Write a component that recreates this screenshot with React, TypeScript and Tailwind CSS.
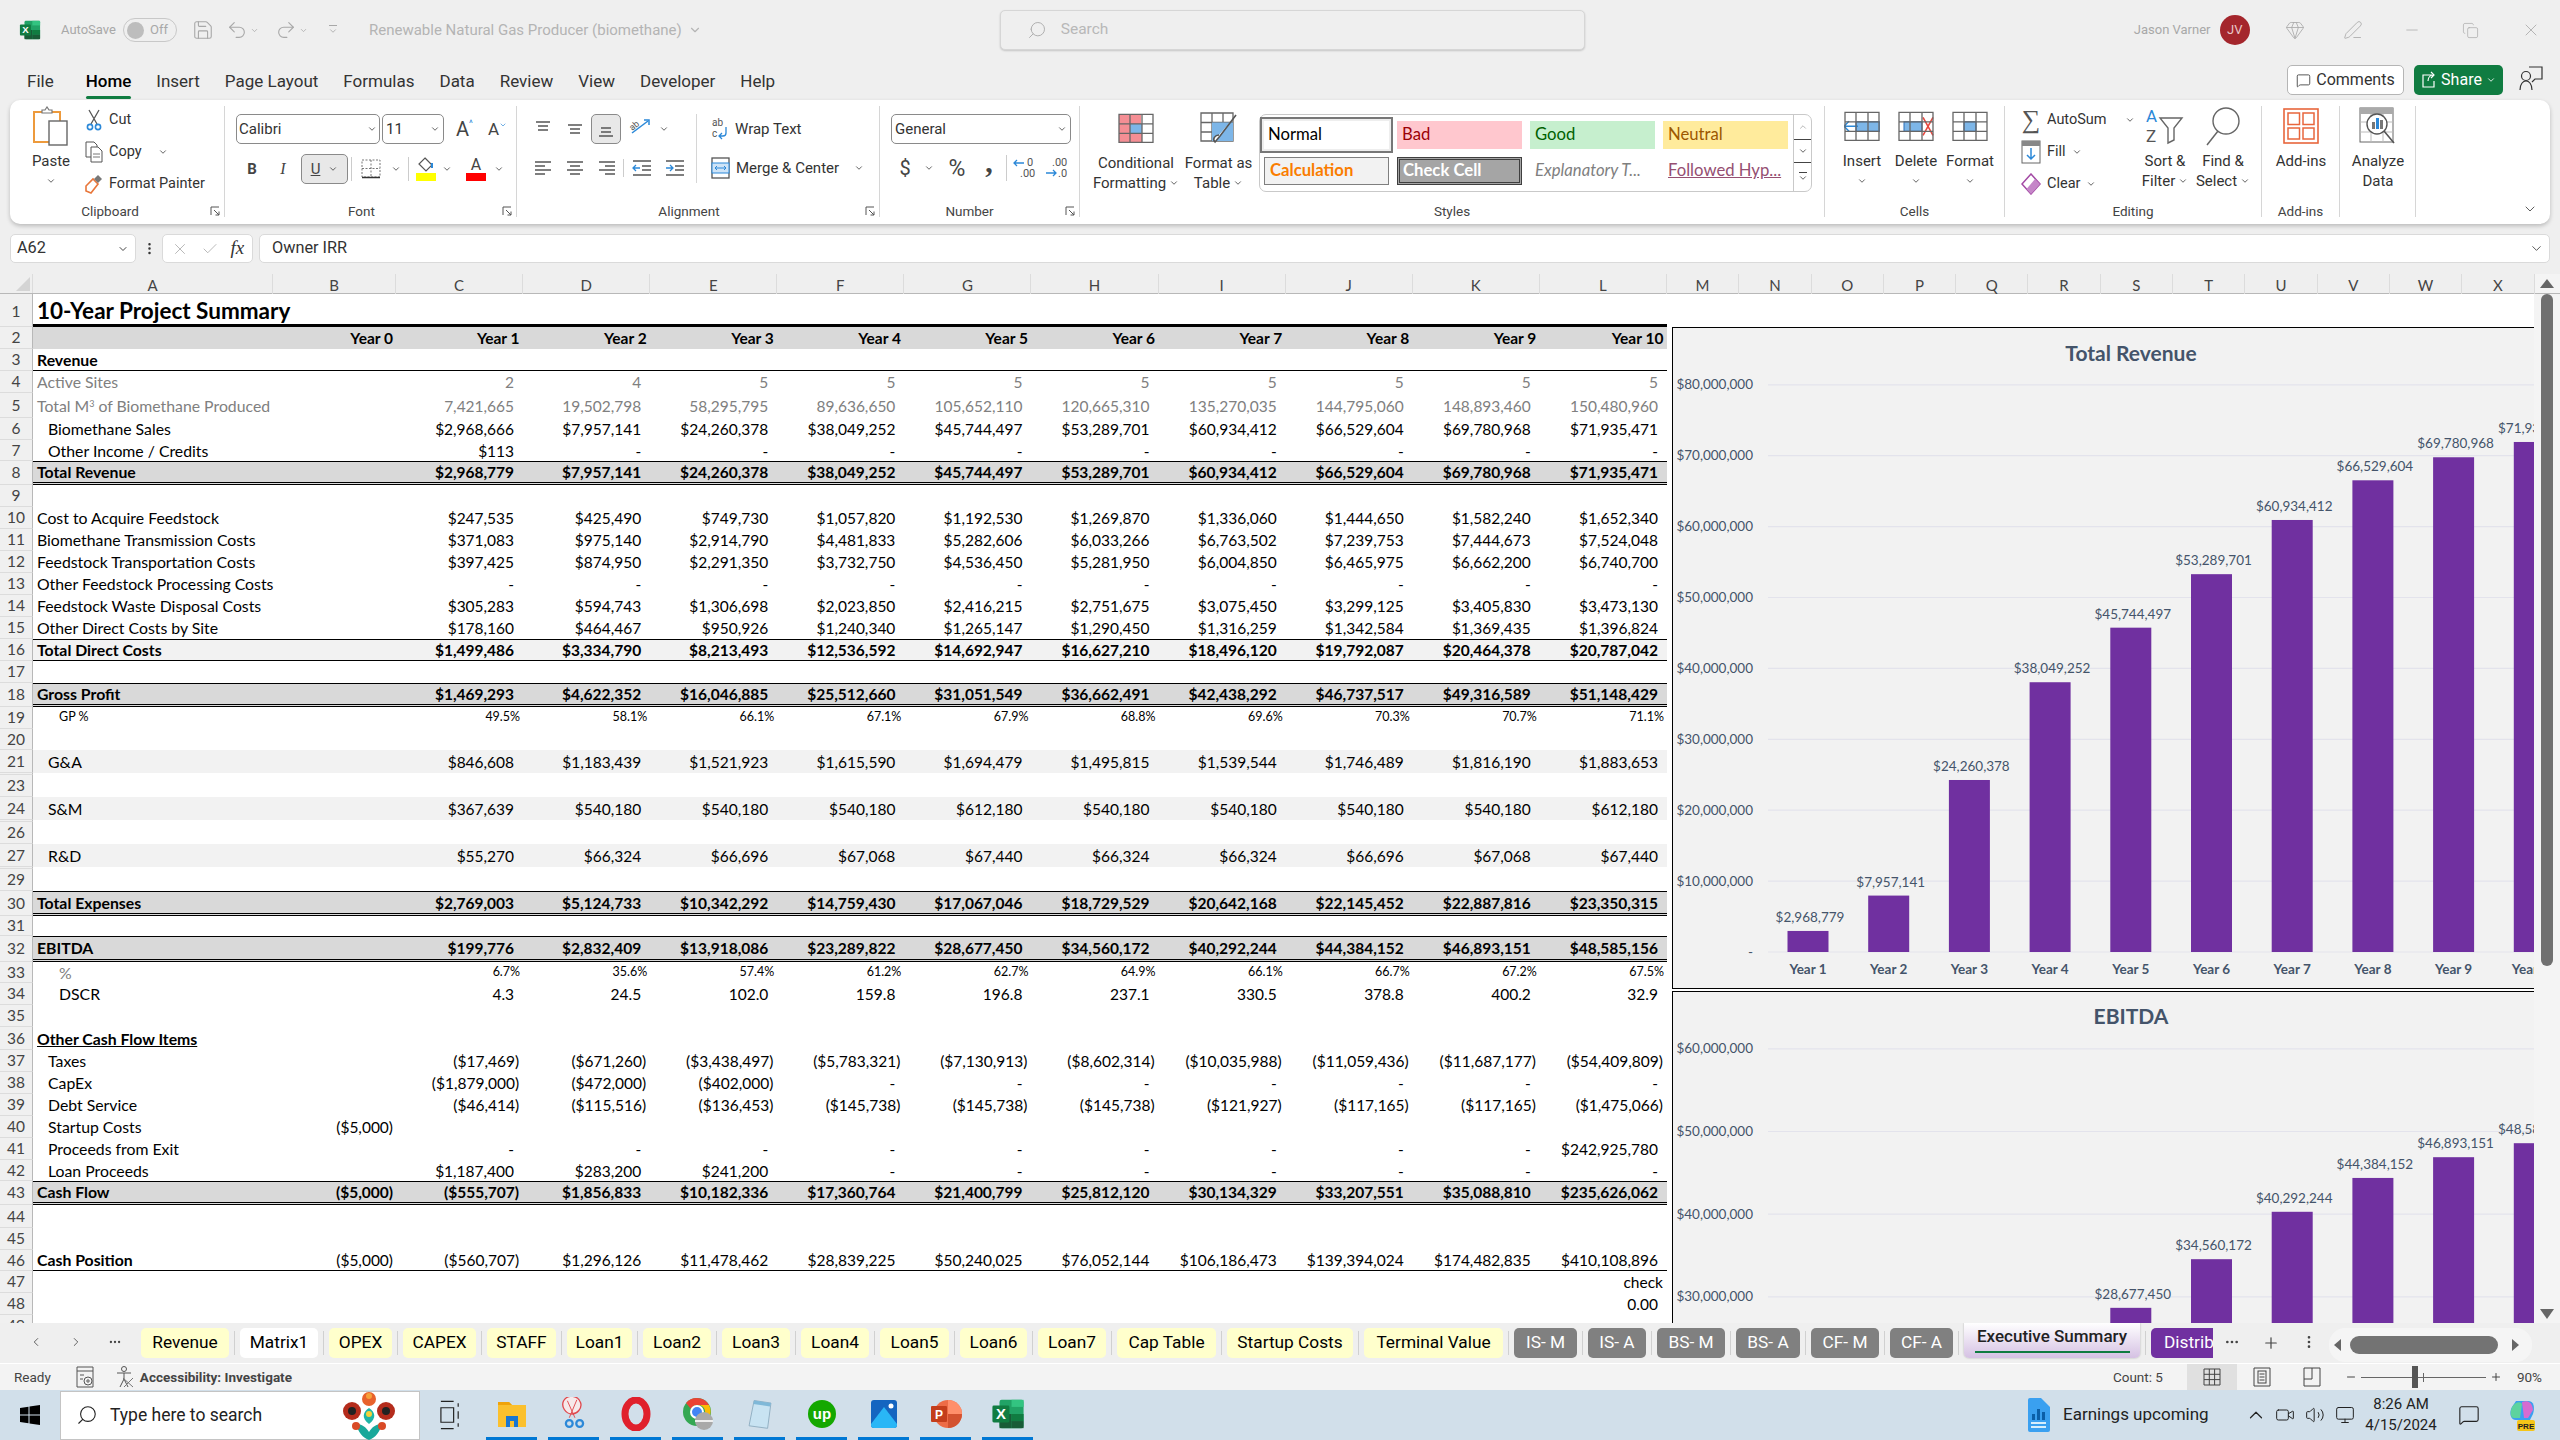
import React from "react";
import { ChevronDown, ChevronUp, ChevronLeft, ChevronRight, Search, Minus, X, Check, MessageSquare, Gem, Undo2, Redo2, Save, PenLine, Copy as CopyIcon, MoreHorizontal, Plus, MoreVertical, Volume2, Monitor, Video } from "lucide-react";

const v = (s: string) => s.split(" ");
const dash = v("- - - - - - - - - -");
type R = { n: number | null; h: number; label?: string; sub?: boolean; ind?: number; b?: string; vals?: string[]; kind?: string };
const rows: R[] = [
  { n: 1, h: 33, kind: "title", label: "10-Year Project Summary" },
  { n: 2, h: 22, kind: "head", b: "Year 0", vals: v("Year_1 Year_2 Year_3 Year_4 Year_5 Year_6 Year_7 Year_8 Year_9 Year_10").map((x) => x.replace("_", " ")) },
  { n: 3, h: 22, kind: "sec", label: "Revenue" },
  { n: 4, h: 22, kind: "gray", label: "Active Sites", vals: v("2 4 5 5 5 5 5 5 5 5") },
  { n: 5, h: 25, kind: "gray", sub: true, label: "Total M", vals: v("7,421,665 19,502,798 58,295,795 89,636,650 105,652,110 120,665,310 135,270,035 144,795,060 148,893,460 150,480,960") },
  { n: 6, h: 22, ind: 1, label: "Biomethane Sales", vals: v("$2,968,666 $7,957,141 $24,260,378 $38,049,252 $45,744,497 $53,289,701 $60,934,412 $66,529,604 $69,780,968 $71,935,471") },
  { n: 7, h: 21, ind: 1, label: "Other Income / Credits", vals: v("$113 - - - - - - - - -") },
  { n: 8, h: 24, kind: "total", label: "Total Revenue", vals: v("$2,968,779 $7,957,141 $24,260,378 $38,049,252 $45,744,497 $53,289,701 $60,934,412 $66,529,604 $69,780,968 $71,935,471") },
  { n: 9, h: 22 },
  { n: 10, h: 22, label: "Cost to Acquire Feedstock", vals: v("$247,535 $425,490 $749,730 $1,057,820 $1,192,530 $1,269,870 $1,336,060 $1,444,650 $1,582,240 $1,652,340") },
  { n: 11, h: 22, label: "Biomethane Transmission Costs", vals: v("$371,083 $975,140 $2,914,790 $4,481,833 $5,282,606 $6,033,266 $6,763,502 $7,239,753 $7,444,673 $7,524,048") },
  { n: 12, h: 22, label: "Feedstock Transportation Costs", vals: v("$397,425 $874,950 $2,291,350 $3,732,750 $4,536,450 $5,281,950 $6,004,850 $6,465,975 $6,662,200 $6,740,700") },
  { n: 13, h: 22, label: "Other Feedstock Processing Costs", vals: dash },
  { n: 14, h: 22, label: "Feedstock Waste Disposal Costs", vals: v("$305,283 $594,743 $1,306,698 $2,023,850 $2,416,215 $2,751,675 $3,075,450 $3,299,125 $3,405,830 $3,473,130") },
  { n: 15, h: 22, label: "Other Direct Costs by Site", vals: v("$178,160 $464,467 $950,926 $1,240,340 $1,265,147 $1,290,450 $1,316,259 $1,342,584 $1,369,435 $1,396,824") },
  { n: 16, h: 22, kind: "lite", label: "Total Direct Costs", vals: v("$1,499,486 $3,334,790 $8,213,493 $12,536,592 $14,692,947 $16,627,210 $18,496,120 $19,792,087 $20,464,378 $20,787,042") },
  { n: 17, h: 22 },
  { n: 18, h: 24, kind: "total", label: "Gross Profit", vals: v("$1,469,293 $4,622,352 $16,046,885 $25,512,660 $31,051,549 $36,662,491 $42,438,292 $46,737,517 $49,316,589 $51,148,429") },
  { n: 19, h: 22, kind: "pct", ind: 2, label: "GP %", vals: v("49.5% 58.1% 66.1% 67.1% 67.9% 68.8% 69.6% 70.3% 70.7% 71.1%") },
  { n: 20, h: 21 },
  { n: 21, h: 23, kind: "band", ind: 1, label: "G&A", vals: v("$846,608 $1,183,439 $1,521,923 $1,615,590 $1,694,479 $1,495,815 $1,539,544 $1,746,489 $1,816,190 $1,883,653") },
  { n: null, h: 2 },
  { n: 23, h: 22 },
  { n: 24, h: 23, kind: "band", ind: 1, label: "S&M", vals: v("$367,639 $540,180 $540,180 $540,180 $612,180 $540,180 $540,180 $540,180 $540,180 $612,180") },
  { n: null, h: 2 },
  { n: 26, h: 22 },
  { n: 27, h: 23, kind: "band", ind: 1, label: "R&D", vals: v("$55,270 $66,324 $66,696 $67,068 $67,440 $66,324 $66,324 $66,696 $67,068 $67,440") },
  { n: null, h: 2 },
  { n: 29, h: 22 },
  { n: 30, h: 25, kind: "total", label: "Total Expenses", vals: v("$2,769,003 $5,124,733 $10,342,292 $14,759,430 $17,067,046 $18,729,529 $20,642,168 $22,145,452 $22,887,816 $23,350,315") },
  { n: 31, h: 20 },
  { n: 32, h: 26, kind: "total", label: "EBITDA", vals: v("$199,776 $2,832,409 $13,918,086 $23,289,822 $28,677,450 $34,560,172 $40,292,244 $44,384,152 $46,893,151 $48,585,156") },
  { n: 33, h: 21, kind: "pctgray", ind: 2, label: "%", vals: v("6.7% 35.6% 57.4% 61.2% 62.7% 64.9% 66.1% 66.7% 67.2% 67.5%") },
  { n: 34, h: 22, ind: 2, label: "DSCR", vals: v("4.3 24.5 102.0 159.8 196.8 237.1 330.5 378.8 400.2 32.9") },
  { n: 35, h: 22 },
  { n: 36, h: 23, kind: "under", label: "Other Cash Flow Items" },
  { n: 37, h: 22, ind: 1, label: "Taxes", vals: v("($17,469) ($671,260) ($3,438,497) ($5,783,321) ($7,130,913) ($8,602,314) ($10,035,988) ($11,059,436) ($11,687,177) ($54,409,809)") },
  { n: 38, h: 22, ind: 1, label: "CapEx", vals: v("($1,879,000) ($472,000) ($402,000) - - - - - - -") },
  { n: 39, h: 22, ind: 1, label: "Debt Service", vals: v("($46,414) ($115,516) ($136,453) ($145,738) ($145,738) ($145,738) ($121,927) ($117,165) ($117,165) ($1,475,066)") },
  { n: 40, h: 22, ind: 1, label: "Startup Costs", b: "($5,000)" },
  { n: 41, h: 22, ind: 1, label: "Proceeds from Exit", vals: v("- - - - - - - - - $242,925,780") },
  { n: 42, h: 21, ind: 1, label: "Loan Proceeds", vals: v("$1,187,400 $283,200 $241,200 - - - - - - -") },
  { n: 43, h: 24, kind: "total", label: "Cash Flow", b: "($5,000)", vals: v("($555,707) $1,856,833 $10,182,336 $17,360,764 $21,400,799 $25,812,120 $30,134,329 $33,207,551 $35,088,810 $235,626,062") },
  { n: 44, h: 23 },
  { n: 45, h: 22 },
  { n: 46, h: 21, kind: "pos", label: "Cash Position", b: "($5,000)", vals: v("($560,707) $1,296,126 $11,478,462 $28,839,225 $50,240,025 $76,052,144 $106,186,473 $139,394,024 $174,482,835 $410,108,896") },
  { n: 47, h: 22, vals: ["", "", "", "", "", "", "", "", "", "check)"] },
  { n: 48, h: 22, vals: ["", "", "", "", "", "", "", "", "", "0.00"] },
  { n: 49, h: 22 },
];

const rowClass: Record<string, string> = {
  total: "bg-[#d9d9d9] border-t-[1.5px] border-b-[3px] border-t-black border-b-black [border-bottom-style:double] font-bold text-black",
  lite: "bg-[#f2f2f2] border-t border-b border-black font-bold text-black",
  head: "bg-[#d9d9d9] font-bold text-black",
  sec: "border-b border-black font-bold text-black",
  gray: "text-[#808080]",
  title: "border-b-[3px] border-black text-black",
  band: "bg-[#f2f2f2] text-black",
  pos: "border-b-[1.5px] border-black text-black",
  pct: "text-black",
  pctgray: "text-black",
  under: "text-black",
  plain: "text-black",
};

function Cell({ t, pct, head }: { t: string; pct?: boolean; head?: boolean }) {
  const paren = t.endsWith(")");
  const txt = t === "check)" ? "check" : t;
  return (
    <div className={`flex justify-end whitespace-nowrap ${pct ? "items-start pr-[3px] pt-[1px] text-[12.5px]" : head ? "items-center pr-[3.5px]" : paren ? "items-center pr-[4px]" : "items-center pr-[9px]"}`}>
      {txt}
    </div>
  );
}

function Row({ r }: { r: R }) {
  const k = r.kind ?? "plain";
  const pct = k === "pct" || k === "pctgray";
  const indent = r.ind === 1 ? "pl-[15px]" : r.ind === 2 ? "pl-[26px]" : "pl-[4px]";
  return (
    <div className="flex shrink-0" style={{ height: r.h }}>
      <div className={`flex w-[33px] shrink-0 items-center justify-center border-r-[1.5px] border-b border-r-[#b8b8b8] border-b-[#dcdcdc] bg-[#f0f0f0] text-[15.5px] text-[#444] ${k === "title" ? "pt-[4px]" : "pt-[1px]"}`}>{r.n}</div>
      <div className={`grid flex-1 grid-cols-[240px_123px_repeat(10,127.1px)] text-[15.5px] leading-[18px] ${rowClass[k] ?? ""}`}>
        <div className={`flex whitespace-nowrap text-[15.8px] ${indent} ${k === "pct" ? "items-start pt-[1px] !text-[12.5px]" : "items-center"} ${k === "title" ? "pt-[3px]" : ""}`}>
          {k === "title" ? (
            <span className="text-[22.5px] font-bold text-black">{r.label}</span>
          ) : k === "under" ? (
            <span className="font-bold underline">{r.label}</span>
          ) : k === "pos" ? (
            <span className="font-bold">{r.label}</span>
          ) : k === "pctgray" ? (
            <span className="text-[#808080]">{r.label}</span>
          ) : r.sub ? (
            <span>
              {r.label}
              <sup className="text-[9px]">3</sup> of Biomethane Produced
            </span>
          ) : (
            r.label
          )}
        </div>
        {r.b ? <div className="flex items-center justify-end whitespace-nowrap pr-[3px]">{r.b}</div> : <div />}
        {r.vals?.map((t, i) => <Cell key={i} t={t} pct={pct} head={k === "head"} />)}
      </div>
    </div>
  );
}

const Chev = ({ s = 11, c = "#444" }: { s?: number; c?: string }) => <ChevronDown size={s} strokeWidth={2} color={c} className="shrink-0" />;

function XlLogo({ s = 22 }: { s?: number }) {
  return (
    <svg width={s} height={s} viewBox="0 0 24 24">
      <rect x="6" y="2" width="17" height="20" rx="1.5" fill="#21a366" />
      <rect x="14.5" y="2" width="8.5" height="5" fill="#33c481" />
      <rect x="6" y="12" width="8.5" height="10" fill="#185c37" />
      <rect x="14.5" y="12" width="8.5" height="5" fill="#107c41" />
      <rect x="14.5" y="17" width="8.5" height="5" fill="#185c37" />
      <rect x="1" y="6" width="12" height="12" rx="1" fill="#107c41" />
      <text x="7" y="15.5" textAnchor="middle" fontSize="10.5" fontWeight="700" fill="#fff" fontFamily="Liberation Sans">X</text>
    </svg>
  );
}

function Grid({ children, s = 36 }: { children?: React.ReactNode; s?: number }) {
  return (
    <svg width={s} height={s * 0.85} viewBox="0 0 36 30" fill="none">
      {children}
      <path d="M1 1h34v28H1zM12 1v28M24 1v28M1 10.5h34M1 20h34" stroke="#666" strokeWidth="1.3" />
    </svg>
  );
}

const Dialog = () => (
  <svg width="10" height="10" viewBox="0 0 10 10" fill="none" className="absolute right-[4px] top-[2px]">
    <path d="M1 9V1h8M4 4l5 5M9 5.5V9H5.5" stroke="#555" strokeWidth="1" />
  </svg>
);

function Group({ w, label, children, launcher, sep = true, lp = "" }: { w: string; label?: string; children: React.ReactNode; launcher?: boolean; sep?: boolean; lp?: string }) {
  return (
    <div className={`flex h-full shrink-0 flex-col ${w} ${sep ? "border-r border-[#d6d6d6]" : ""}`}>
      <div className="flex-1">{children}</div>
      <div className={`relative -mb-[3px] flex h-[16px] items-center justify-center text-[13.5px] text-[#444] ${lp}`}>
        <span className="-mt-[2px]">{label}</span>
        {launcher && <Dialog />}
      </div>
    </div>
  );
}

function Big({ w, icon, lines, chevOn, iconH = "h-[40px]" }: { w: string; icon: React.ReactNode; lines: string[]; chevOn?: number; iconH?: string }) {
  return (
    <div className={`flex shrink-0 flex-col items-center ${w}`}>
      <div className={`flex items-center justify-center ${iconH}`}>{icon}</div>
      <div className="mt-[5px] flex flex-col items-center text-[15px] leading-[20px] text-[#333]">
        {lines.map((l, i) => (
          <div key={i} className="flex items-center gap-[3px] whitespace-nowrap">
            {l}
            {chevOn === i && <Chev s={10} />}
          </div>
        ))}
        {chevOn === lines.length && <div className="flex h-[20px] items-center"><Chev s={10} /></div>}
      </div>
    </div>
  );
}

function AlignIcon({ kind }: { kind: string }) {
  const map: Record<string, string> = {
    top: "M2 2h14M4 6h10M4 10h10",
    mid: "M2 5h14M4 9h10M4 13h10",
    bot: "M4 8h10M4 12h10M2 16h14",
    left: "M1 3h16M1 7h10M1 11h16M1 15h10",
    center: "M1 3h16M4 7h10M1 11h16M4 15h10",
    right: "M1 3h16M7 7h10M1 11h16M7 15h10",
  };
  return (
    <svg width="18" height="18" viewBox="0 0 18 18" fill="none">
      <path d={map[kind]} stroke="#555" strokeWidth="1.3" />
    </svg>
  );
}

function Ribbon() {
  return (
    <div className="mx-[10px] flex h-[124px] shrink-0 rounded-[10px] bg-white pt-[6px] pb-[7px] shadow-[0_2px_4px_rgba(0,0,0,0.22)]">
      <Group w="w-[215px]" label="Clipboard" launcher lp="pr-[14px]">
        <div className="flex">
          <div className="ml-[11px]">
            <Big w="w-[60px]" chevOn={1} lines={["Paste"]} icon={
              <svg width="38" height="40" viewBox="0 0 38 40" fill="none">
                <rect x="2" y="6" width="26" height="30" fill="#fff" stroke="#ed9a3c" strokeWidth="2" />
                <path d="M10 7V4h3l2-3 2 3h3v3z" fill="#fff" stroke="#777" strokeWidth="1.2" />
                <rect x="17" y="15" width="18" height="24" fill="#fff" stroke="#666" strokeWidth="1.4" />
              </svg>
            } />
          </div>
          <div className="-mt-[2px] ml-[4px] flex flex-col text-[14.5px] text-[#333]">
            <div className="flex h-[32px] items-center gap-[6px]">
              <svg width="18" height="22" viewBox="0 0 18 22" fill="none"><path d="M4 1l8 14M14 1L6 15" stroke="#555" strokeWidth="1.3" /><circle cx="5" cy="18" r="2.6" stroke="#2b88d8" strokeWidth="1.6" /><circle cx="13" cy="18" r="2.6" stroke="#2b88d8" strokeWidth="1.6" /></svg>
              Cut
            </div>
            <div className="flex h-[32px] items-center gap-[6px]">
              <svg width="18" height="22" viewBox="0 0 18 22" fill="none"><path d="M1 1h8l3 3v12H1z" fill="#fff" stroke="#555" /><path d="M6 6h7l4 4v11H6z" fill="#fff" stroke="#555" /><path d="M8 13h7M8 16h7" stroke="#777" /></svg>
              Copy
              <span className="ml-[10px]"><Chev s={10} /></span>
            </div>
            <div className="flex h-[32px] items-center gap-[6px]">
              <svg width="18" height="20" viewBox="0 0 18 20" fill="none"><path d="M1 12l7-7 5 5-7 9-5-2z" fill="#fff" stroke="#e8763a" strokeWidth="1.6" /><path d="M9 5l4-4 4 4-4 4z" fill="#777" /></svg>
              Format Painter
            </div>
          </div>
        </div>
      </Group>

      <Group w="w-[292px]" label="Font" launcher lp="pr-[18px]">
        <div className="pt-[8px] pl-[11px]">
          <div className="flex items-center gap-[2px]">
            <div className="flex h-[30px] w-[144px] items-center justify-between rounded-[5px] border border-[#8a8a8a] px-[2px] text-[15px] text-[#333]">Calibri<Chev s={10} /></div>
            <div className="flex h-[30px] w-[62px] items-center justify-between rounded-[5px] border border-[#8a8a8a] px-[3px] text-[15px] text-[#333]">11<Chev s={10} /></div>
            <span className="ml-[10px] flex w-[22px] items-start text-[20px] leading-none text-[#444]">A<span className="text-[9px] text-[#2b88d8]">^</span></span>
            <span className="ml-[8px] flex w-[22px] items-start text-[17px] leading-none text-[#444]">A<ChevronDown size={8} color="#2b88d8" /></span>
          </div>
          <div className="mt-[10px] flex items-center text-[#444]">
            <span className="flex w-[32px] justify-center text-[15px] font-bold">B</span>
            <span className="flex w-[30px] justify-center font-['Liberation_Serif',serif] text-[16px] italic">I</span>
            <span className="ml-[3px] flex h-[30px] w-[47px] items-center justify-center gap-[8px] rounded-[5px] border border-[#8a8a8a] bg-[#e8e8e8] text-[15px] underline">U<Chev s={10} /></span>
            <span className="mx-[3px] h-[24px] w-px bg-[#ccc]" />
            <span className="ml-[6px] flex items-center gap-[10px]">
              <svg width="20" height="20" viewBox="0 0 20 20" fill="none"><path d="M1 1h18v17H1zM10 1v17M1 9.5h18" stroke="#777" strokeDasharray="2 1.5" /><path d="M1 18.5h18" stroke="#333" strokeWidth="1.5" /></svg>
              <Chev s={10} />
            </span>
            <span className="mx-[7px] h-[24px] w-px bg-[#ccc]" />
            <span className="flex items-center gap-[6px]">
              <span className="flex flex-col items-center">
                <svg width="20" height="16" viewBox="0 0 20 16" fill="none"><path d="M9 1l7 7-6 6-7-7z" stroke="#555" strokeWidth="1.2" /><path d="M16 6v5" stroke="#2b88d8" strokeWidth="2" /></svg>
                <span className="h-[8px] w-[20px] bg-[#ffff00]" />
              </span>
              <Chev s={10} />
            </span>
            <span className="ml-[14px] flex items-center gap-[8px]">
              <span className="flex flex-col items-center leading-none">
                <span className="h-[16px] text-[16px] leading-[16px]">A</span>
                <span className="h-[8px] w-[20px] bg-[#ff0000]" />
              </span>
              <Chev s={10} />
            </span>
          </div>
        </div>
      </Group>

      <Group w="w-[363px]" label="Alignment" launcher lp="pr-[18px]">
        <div className="flex pt-[8px] pl-[10px]">
          <div className="flex w-[169px] flex-col">
            <div className="flex h-[30px] items-center">
              <span className="flex w-[32px] justify-center"><AlignIcon kind="top" /></span>
              <span className="flex w-[32px] justify-center"><AlignIcon kind="mid" /></span>
              <span className="flex h-[30px] w-[30px] items-center justify-center rounded-[5px] border border-[#8a8a8a] bg-[#e8e8e8]"><AlignIcon kind="bot" /></span>
              <span className="ml-[3px] flex items-center gap-[7px] pl-[4px]">
                <svg width="24" height="24" viewBox="0 0 24 24" fill="none"><path d="M4 16L20 4" stroke="#2b88d8" strokeWidth="1.5" /><path d="M16 3h5v5" stroke="#2b88d8" strokeWidth="1.5" /><text x="2" y="12" fontSize="9" fill="#555" fontFamily="Roboto" transform="rotate(-40 6 10)">ab</text></svg>
                <Chev s={10} />
              </span>
            </div>
            <div className="mt-[9px] flex h-[30px] items-center">
              <span className="flex w-[32px] justify-center"><AlignIcon kind="left" /></span>
              <span className="flex w-[32px] justify-center"><AlignIcon kind="center" /></span>
              <span className="flex w-[32px] justify-center"><AlignIcon kind="right" /></span>
              <span className="flex w-[36px] justify-center border-l border-[#ccc]">
                <svg width="20" height="18" viewBox="0 0 20 18" fill="none"><path d="M1 2h18M10 7h9M10 11h9M1 16h18" stroke="#555" strokeWidth="1.3" /><path d="M8 9H1m3-3L1 9l3 3" stroke="#2b88d8" strokeWidth="1.3" /></svg>
              </span>
              <span className="flex w-[32px] justify-center">
                <svg width="20" height="18" viewBox="0 0 20 18" fill="none"><path d="M1 2h18M10 7h9M10 11h9M1 16h18" stroke="#555" strokeWidth="1.3" /><path d="M1 9h7m-3-3l3 3-3 3" stroke="#2b88d8" strokeWidth="1.3" /></svg>
              </span>
            </div>
          </div>
          <div className="flex flex-col border-l border-[#d6d6d6] pl-[14px] text-[15px] text-[#333]">
            <div className="flex h-[30px] items-center gap-[6px]">
              <svg width="18" height="24" viewBox="0 0 18 24" fill="none"><text x="1" y="9" fontSize="10" fill="#555" fontFamily="Roboto">ab</text><text x="1" y="20" fontSize="10" fill="#555" fontFamily="Roboto">c</text><path d="M15 10v6a3 3 0 01-3 3H8m3-3l-3 3 3 3" stroke="#2b88d8" strokeWidth="1.3" /></svg>
              Wrap Text
            </div>
            <div className="mt-[9px] flex h-[30px] items-center gap-[6px]">
              <svg width="19" height="22" viewBox="0 0 19 22" fill="none"><rect x="1" y="1" width="17" height="20" stroke="#555" strokeWidth="1.3" /><rect x="1" y="6" width="17" height="10" fill="#cfe4f7" stroke="#2b88d8" /><path d="M4 11h11M6 9l-2 2 2 2M13 9l2 2-2 2" stroke="#2b88d8" /></svg>
              Merge &amp; Center
              <span className="ml-[9px]"><Chev s={10} /></span>
            </div>
          </div>
        </div>
      </Group>

      <Group w="w-[200px]" label="Number" launcher lp="pr-[20px]">
        <div className="pt-[8px] pl-[11px]">
          <div className="flex h-[30px] w-[180px] items-center justify-between rounded-[5px] border border-[#8a8a8a] px-[3px] text-[15px] text-[#333]">General<Chev s={10} /></div>
          <div className="mt-[9px] flex h-[30px] items-center text-[#444]">
            <span className="flex w-[28px] justify-center text-[20px]">$</span>
            <span className="flex w-[20px] justify-center"><Chev s={10} /></span>
            <span className="flex w-[36px] justify-center text-[23px] leading-none">%</span>
            <span className="flex h-[30px] w-[28px] justify-center font-['Liberation_Serif',serif] text-[30px] font-bold leading-[18px]">,</span>
            <span className="ml-[3px] h-[26px] w-px bg-[#ccc]" />
            <span className="flex w-[35px] justify-center">
              <svg width="26" height="24" viewBox="0 0 26 24" fill="none"><path d="M12 7H2m3-3L2 7l3 3" stroke="#2b88d8" strokeWidth="1.3" /><text x="15" y="10" fontSize="11" fill="#555" fontFamily="Roboto">0</text><text x="8" y="21" fontSize="11" fill="#555" fontFamily="Roboto">.00</text></svg>
            </span>
            <span className="flex w-[30px] justify-center">
              <svg width="26" height="24" viewBox="0 0 26 24" fill="none"><text x="8" y="10" fontSize="11" fill="#555" fontFamily="Roboto">.00</text><path d="M2 17h10m-3-3l3 3-3 3" stroke="#2b88d8" strokeWidth="1.3" /><text x="14" y="21" fontSize="11" fill="#555" fontFamily="Roboto">.0</text></svg>
            </span>
          </div>
        </div>
      </Group>

      <Group w="w-[745px]" label="Styles">
        <div className="flex">
          <div className="ml-[14px]">
            <div className="pt-[2px]" />
            <Big w="w-[84px]" chevOn={1} lines={["Conditional", "Formatting"]} icon={
              <Grid><path d="M1 1h22v10H12v9h12v9H1z" fill="#f58e94" /><rect x="12" y="10.5" width="12" height="9.5" fill="#7db6e8" /></Grid>
            } />
          </div>
          <div>
            <div className="pt-[2px]" />
            <Big w="w-[81px]" chevOn={1} lines={["Format as", "Table"]} icon={
              <svg width="38" height="32" viewBox="0 0 38 32" fill="none"><path d="M1 1h32v28H1zM12 1v28M23 1v28M1 10.5h32M1 20h32" stroke="#666" strokeWidth="1.3" /><rect x="12" y="10.5" width="21" height="18.5" fill="#7db6e8" /><path d="M36 3L20 24l-5 6c-3-3 0-7 4-7" stroke="#555" strokeWidth="1.6" fill="#fff" /></svg>
            } />
          </div>
          <div className="mt-[8px] flex h-[78px] w-[553px] rounded-[7px] border border-[#c9c9c9] font-['Lato',sans-serif] text-[16.7px]">
            <div className="grid w-[533px] grid-cols-[137px_133px_133px_130px] grid-rows-[40px_32px] items-center">
              <div className="flex h-[36px] w-[133px] items-center border-[2px] border-[#777] bg-white pl-[6px] text-black shadow-[inset_0_0_0_2px_#eee]">Normal</div>
              <div className="flex h-[28px] w-[125px] items-center bg-[#ffc7ce] pl-[5px] text-[#9c0006]">Bad</div>
              <div className="flex h-[28px] w-[125px] items-center bg-[#c6efce] pl-[5px] text-[#006100]">Good</div>
              <div className="flex h-[28px] w-[125px] items-center bg-[#ffeb9c] pl-[5px] text-[#9c5700]">Neutral</div>
              <div className="ml-[4px] flex h-[28px] w-[125px] items-center border border-[#7f7f7f] bg-[#f2f2f2] pl-[5px] font-bold text-[#fa7d00]">Calculation</div>
              <div className="flex h-[28px] w-[125px] items-center border-[3px] border-double border-[#3f3f3f] bg-[#a5a5a5] pl-[3px] font-bold text-white">Check Cell</div>
              <div className="flex h-[28px] w-[125px] items-center pl-[5px] italic text-[#7f7f7f]">Explanatory T...</div>
              <div className="flex h-[28px] w-[125px] items-center pl-[5px] text-[#954f72] underline">Followed Hyp...</div>
            </div>
            <div className="flex w-[19px] flex-col border-l border-[#c9c9c9]">
              <div className="flex h-[24px] items-center justify-center"><ChevronUp size={10} color="#aaa" /></div>
              <div className="flex h-[24px] items-center justify-center border-y border-[#444]"><Chev s={10} /></div>
              <div className="flex flex-1 flex-col items-center justify-center"><span className="h-px w-[8px] bg-[#444]" /><Chev s={10} /></div>
            </div>
          </div>
        </div>
      </Group>

      <Group w="w-[180px]" label="Cells">
        <div className="flex pl-[10px]">
          <Big w="w-[54px]" chevOn={1} lines={["Insert"]} icon={
            <Grid><rect x="12" y="10.5" width="24" height="9.5" fill="#7db6e8" stroke="#2b6fb8" /><path d="M14 15H0m5-5l-5 5 5 5" stroke="#2b88d8" strokeWidth="1.5" fill="#fff" /></Grid>
          } />
          <Big w="w-[54px]" chevOn={1} lines={["Delete"]} icon={
            <Grid><rect x="6" y="10.5" width="18" height="9.5" fill="#7db6e8" stroke="#2b6fb8" /><path d="M25 6l10 18M35 6L25 24" stroke="#e8483f" strokeWidth="1.6" /></Grid>
          } />
          <Big w="w-[54px]" chevOn={1} lines={["Format"]} icon={
            <Grid><rect x="12" y="10.5" width="12" height="9.5" fill="#7db6e8" stroke="#2b6fb8" /></Grid>
          } />
        </div>
      </Group>

      <Group w="w-[257px]" label="Editing">
        <div className="flex">
          <div className="-mt-[2px] flex w-[131px] flex-col pl-[16px] text-[14.5px] text-[#333]">
            <div className="flex h-[32px] items-center gap-[6px]"><span className="flex w-[20px] justify-center font-['Liberation_Serif',serif] text-[26px] leading-none text-[#555]">∑</span>AutoSum<span className="ml-[12px]"><Chev s={10} /></span></div>
            <div className="flex h-[32px] items-center gap-[6px]">
              <svg width="20" height="24" viewBox="0 0 20 24" fill="none"><rect x="1" y="1" width="18" height="22" fill="#fff" stroke="#666" /><rect x="1" y="1" width="18" height="5" fill="#888" /><path d="M10 8v11m-4-4l4 4 4-4" stroke="#2b88d8" strokeWidth="1.5" /></svg>
              Fill<Chev s={10} />
            </div>
            <div className="flex h-[32px] items-center gap-[6px]">
              <svg width="20" height="22" viewBox="0 0 20 22" fill="none"><path d="M10 1l9 10-9 10L1 11z" fill="#fff" stroke="#a349a4" strokeWidth="1.5" /><path d="M5.5 16L14 6l5 5-9 10z" fill="#c586c8" /></svg>
              Clear<Chev s={10} />
            </div>
          </div>
          <Big w="w-[58px]" chevOn={1} lines={["Sort &", "Filter"]} icon={
            <svg width="40" height="38" viewBox="0 0 40 38" fill="none"><text x="1" y="15" fontSize="17" fill="#2b88d8" fontFamily="Roboto">A</text><text x="1" y="35" fontSize="17" fill="#555" fontFamily="Roboto">Z</text><path d="M15 11h22l-8 10v12l-6 3V21z" fill="#fff" stroke="#666" strokeWidth="1.4" /></svg>
          } />
          <Big w="w-[58px]" chevOn={1} lines={["Find &", "Select"]} icon={
            <svg width="38" height="40" viewBox="0 0 38 40" fill="none"><circle cx="22" cy="15" r="13" fill="#fff" stroke="#666" strokeWidth="1.4" /><path d="M14 25L3 39" stroke="#666" strokeWidth="1.5" /></svg>
          } />
        </div>
      </Group>

      <Group w="w-[78px]" label="Add-ins">
        <Big w="w-[78px]" lines={["Add-ins"]} icon={
          <svg width="36" height="36" viewBox="0 0 36 36" fill="none"><rect x="1" y="1" width="34" height="34" stroke="#e8663c" strokeWidth="1.6" /><rect x="5" y="5" width="11.5" height="11.5" stroke="#e8663c" strokeWidth="1.5" /><rect x="20" y="5" width="11" height="11.5" stroke="#e8663c" strokeWidth="1.5" /><rect x="5" y="20" width="11.5" height="11" stroke="#e8663c" strokeWidth="1.5" /><rect x="20" y="20" width="11" height="11" stroke="#e8663c" strokeWidth="1.5" /></svg>
        } />
      </Group>
      <Group w="w-[76px]" label=" ">
        <Big w="w-[76px]" lines={["Analyze", "Data"]} icon={
          <svg width="38" height="38" viewBox="0 0 38 38" fill="none"><rect x="1" y="1" width="33" height="34" fill="#fff" stroke="#666" /><rect x="1" y="1" width="33" height="6" fill="#aaa" /><path d="M1 15h33M1 25h33M12 7v28M24 7v28" stroke="#bbb" /><circle cx="18" cy="17" r="10" fill="#fff" stroke="#555" strokeWidth="1.4" /><rect x="13" y="15" width="3" height="7" fill="#777" /><rect x="17" y="11" width="3" height="11" fill="#2b88d8" /><rect x="21" y="13" width="3" height="9" fill="#777" /><path d="M25 24l10 12" stroke="#555" strokeWidth="1.6" /></svg>
        } />
      </Group>
      <div className="flex flex-1 items-end justify-end pr-[12px]"><ChevronDown size={16} strokeWidth={1.3} color="#444" /></div>
    </div>
  );
}

const cats = ["Year 1", "Year 2", "Year 3", "Year 4", "Year 5", "Year 6", "Year 7", "Year 8", "Year 9", "Year 10"];
const rev = [2968779, 7957141, 24260378, 38049252, 45744497, 53289701, 60934412, 66529604, 69780968, 71935471];
const ebitda = [199776, 2832409, 13918086, 23289822, 28677450, 34560172, 40292244, 44384152, 46893151, 48585156];
const fmt = (n: number) => "$" + n.toLocaleString("en-US");

function Chart({ title, data, zero, per, max, top, h, titleY }: { title: string; data: number[]; zero: number; per: number; max: number; top: number; h: number; titleY: number }) {
  const ticks = Array.from({ length: max + 1 }, (_, i) => i);
  return (
    <svg width="862" height={h} viewBox={`1673 ${top} 862 ${h}`} className="block font-['Lato',sans-serif]">
      <text x="2131" y={titleY} textAnchor="middle" fontSize="21" fontWeight="700" fill="#44546a">{title}</text>
      {ticks.map((t) => (
        <g key={t}>
          <line x1="1768" x2="2534" y1={zero - t * per} y2={zero - t * per} stroke="#e3e3ec" strokeWidth="1.2" />
          <text x="1753" y={zero - t * per + 4.5} textAnchor="end" fontSize="13.5" fill="#44546a">{t === 0 ? "-" : `$${t}0,000,000`}</text>
        </g>
      ))}
      {data.map((d, i) => {
        const cx = 1808 + i * 80.7;
        const y = zero - (d / 1e7) * per;
        return (
          <g key={i}>
            <rect x={cx - 20.5} y={y} width="41" height={zero - y} fill="#7030a0" />
            <text x={cx + 2} y={y - 9} textAnchor="middle" fontSize="13.5" fill="#44546a">{fmt(d)}</text>
            <text x={cx} y={zero + 22} textAnchor="middle" fontSize="13.5" fontWeight="700" fill="#44546a">{cats[i]}</text>
          </g>
        );
      })}
    </svg>
  );
}

const tabs: [string, string, string][] = [
  ["Revenue", "w-[88px]", "y"], ["Matrix1", "w-[78px]", "w"], ["OPEX", "w-[63px]", "y"], ["CAPEX", "w-[73px]", "y"], ["STAFF", "w-[69px]", "y"],
  ["Loan1", "w-[65px]", "y"], ["Loan2", "w-[68px]", "y"], ["Loan3", "w-[68px]", "y"], ["Loan4", "w-[68px]", "y"], ["Loan5", "w-[69px]", "y"], ["Loan6", "w-[67px]", "y"], ["Loan7", "w-[68px]", "y"],
  ["Cap Table", "w-[99px]", "y"], ["Startup Costs", "w-[126px]", "y"], ["Terminal Value", "w-[139px]", "y"],
  ["IS- M", "w-[63px]", "g"], ["IS- A", "w-[58px]", "g"], ["BS- M", "w-[68px]", "g"], ["BS- A", "w-[64px]", "g"], ["CF- M", "w-[68px]", "g"], ["CF- A", "w-[63px]", "g"],
];

function SheetTabs() {
  return (
    <div className="flex h-[40px] shrink-0 bg-[#efefef] font-['Roboto',sans-serif] text-[17.3px]">
      <div className="flex h-[38px] w-[141px] shrink-0 items-center text-[#444]">
        <span className="ml-[29px] flex w-[14px] justify-center"><ChevronLeft size={18} strokeWidth={1.4} /></span>
        <span className="ml-[26px] flex w-[14px] justify-center"><ChevronRight size={18} strokeWidth={1.4} /></span>
        <span className="ml-[25px] flex w-[14px] justify-center"><MoreHorizontal size={16} /></span>
      </div>
      <div className="flex w-[2072px] shrink-0 items-start overflow-hidden">
        {tabs.map(([t, w, k]) => (
          <React.Fragment key={t}>
            <div className={`mt-[5px] flex h-[30px] shrink-0 items-center justify-center rounded-[5px] ${w} ${k === "y" ? "bg-[#ffffcc] text-black" : k === "w" ? "bg-white text-black" : "bg-[#808080] text-white"}`}>{t}</div>
            <span className="mx-[5px] mt-[8px] h-[24px] w-px shrink-0 bg-[#d0d0d0]" />
          </React.Fragment>
        ))}
        <div className="flex h-[35px] w-[176px] shrink-0 flex-col items-center rounded-b-[5px] bg-gradient-to-b from-white to-[#d5c1e3] pt-[3px] font-medium text-[#222] shadow-[0_0_2px_rgba(0,0,0,0.3)]">
          <span className="whitespace-nowrap text-[17px] leading-[21px]">Executive Summary</span>
          <span className="mt-[4px] h-[2px] w-[155px] bg-[#107c41]" />
        </div>
        <span className="mx-[5px] mt-[8px] h-[24px] w-px shrink-0 bg-[#d0d0d0]" />
        <div className="mt-[5px] flex h-[30px] w-[63px] shrink-0 items-center overflow-hidden rounded-l-[5px] bg-[#7030a0] pl-[13px] text-white">Distrib</div>
      </div>
      <div className="flex flex-1 items-start pt-[11px] text-[#444]">
        <span className="ml-[11px]"><MoreHorizontal size={16} /></span>
        <span className="ml-[22px]"><Plus size={18} strokeWidth={1.6} /></span>
        <span className="ml-[21px]"><MoreVertical size={16} /></span>
        <div className="ml-[12px] flex h-[34px] w-[203px] -translate-y-[6px] items-center rounded-[16px] bg-[#f5f5f5]">
          <span className="ml-[5px] h-0 w-0 border-y-[6px] border-r-[7px] border-y-transparent border-r-[#666]" />
          <span className="ml-[9px] h-[18px] w-[148px] rounded-[9px] bg-[#737373]" />
          <span className="ml-[14px] h-0 w-0 border-y-[6px] border-l-[7px] border-y-transparent border-l-[#666]" />
        </div>
      </div>
    </div>
  );
}

function Taskbar() {
  const U = ({ children }: { children: React.ReactNode }) => (
    <div className="mr-[11px] flex h-[50px] w-[51px] shrink-0 items-center justify-center border-b-[3px] border-[#0078d4]">{children}</div>
  );
  return (
    <div className="flex h-[50px] shrink-0 items-center bg-[#d1dfea] font-['Noto_Sans',sans-serif] text-[#222]">
      <div className="flex w-[60px] shrink-0 justify-center">
        <svg width="22" height="22" viewBox="0 0 22 22"><path d="M1 4l8.5-1.3V10.5H1zM10.5 2.5L21 1v9.5H10.5zM1 11.5h8.5v7.8L1 18zM10.5 11.5H21V21l-10.5-1.5z" fill="#000" /></svg>
      </div>
      <div className="flex h-[49px] w-[360px] shrink-0 items-center border border-[#c4c4c4] bg-white">
        <span className="ml-[15px]"><Search size={22} strokeWidth={1.2} className="-scale-x-100" /></span>
        <span className="ml-[12px] w-[232px] font-['Roboto',sans-serif] text-[17.5px]">Type here to search</span>
        <svg width="54" height="50" viewBox="0 0 54 50">
          <circle cx="27" cy="9" r="7" fill="#e8622c" /><circle cx="27" cy="6" r="3" fill="#f6a13a" />
          <circle cx="10" cy="21" r="9" fill="#b42c1c" /><circle cx="44" cy="21" r="9" fill="#b42c1c" /><circle cx="10" cy="21" r="4" fill="#222" /><circle cx="44" cy="21" r="4" fill="#222" />
          <path d="M27 18c6 4 8 10 0 16-8-6-6-12 0-16z" fill="#1fb5a6" /><circle cx="27" cy="24" r="3" fill="#f6d13a" />
          <path d="M14 34c6 0 10 3 13 8 3-5 7-8 13-8-2 8-7 14-13 16-6-2-11-8-13-16z" fill="#19a89a" />
          <circle cx="14" cy="36" r="4" fill="#d94a26" /><circle cx="40" cy="36" r="4" fill="#d94a26" />
        </svg>
      </div>
      <div className="ml-[10px] flex w-[40px] shrink-0 justify-center">
        <svg width="20" height="30" viewBox="0 0 22 32" fill="none" stroke="#222" strokeWidth="1.3"><path d="M1 1h14M1 31h14M1 8h14v16H1z" /><path d="M20 3v4M20 12v8M20 25v4" /></svg>
      </div>
      <div className="ml-[16px] flex">
        <U><svg width="30" height="30" viewBox="0 0 30 30"><path d="M1 3h11l3 3h14v22H1z" fill="#fbc02d" /><path d="M1 3h11l3 3H1z" fill="#f0a30a" /><path d="M9 28V17h12v11h-4v-6h-4v6z" fill="#1976d2" /></svg></U>
        <U><svg width="30" height="34" viewBox="0 0 30 36" fill="none"><path d="M4 4a10 10 0 0118 2c2 6-4 12-9 12C6 18 1 10 4 4z" fill="#f6e9ea" stroke="#e0484d" strokeWidth="1.4" /><path d="M8 4l8 18M18 3l-8 19" stroke="#e0484d" /><circle cx="10" cy="28" r="3.6" stroke="#2b88d8" strokeWidth="2.4" /><circle cx="21" cy="28" r="3.6" stroke="#2b88d8" strokeWidth="2.4" /></svg></U>
        <U><svg width="30" height="34" viewBox="0 0 30 34"><ellipse cx="15" cy="17" rx="11" ry="14" fill="none" stroke="#e0202c" strokeWidth="7" /></svg></U>
        <U>
          <svg width="32" height="34" viewBox="0 0 32 34"><circle cx="15" cy="15" r="14" fill="#34a853" /><path d="M15 1a14 14 0 0112 7H15a7 7 0 00-6 4L4 6a14 14 0 0111-5z" fill="#ea4335" /><path d="M27 8a14 14 0 01-9 20l5-12a7 7 0 00-8-8z" fill="#fbbc05" /><circle cx="15" cy="15" r="6" fill="#4285f4" stroke="#fff" strokeWidth="2" /><circle cx="22" cy="24" r="9" fill="#a9a9a9" /><path d="M13 24h18" stroke="#eee" strokeWidth="2" /></svg>
        </U>
        <U><svg width="26" height="32" viewBox="0 0 30 38"><path d="M8 3l20 3-4 30-22-3z" fill="#c8e3f2" stroke="#88a8bc" /><path d="M8 3l20 3-1 4-20-3z" fill="#7fb8d8" /></svg></U>
        <U><svg width="30" height="30" viewBox="0 0 30 30"><circle cx="15" cy="15" r="14" fill="#14a800" /><text x="15" y="20" textAnchor="middle" fontSize="15" fontWeight="700" fill="#fff" fontFamily="Liberation Sans">up</text></svg></U>
        <U><svg width="28" height="30" viewBox="0 0 28 30"><rect x="1" y="1" width="26" height="28" rx="3" fill="#1565c0" /><path d="M1 25L14 8l13 17v1a3 3 0 01-3 3H4a3 3 0 01-3-3z" fill="#29b6f6" /><circle cx="21" cy="7" r="2.5" fill="#fff" /></svg></U>
        <U><svg width="32" height="32" viewBox="0 0 32 32"><circle cx="18" cy="16" r="14" fill="#ed6c47" /><path d="M18 2a14 14 0 0114 14H18z" fill="#ff8f6b" /><path d="M18 16h14a14 14 0 01-14 14z" fill="#d35230" /><rect x="1" y="8" width="16" height="16" rx="1" fill="#c43e1c" /><text x="9" y="20.5" textAnchor="middle" fontSize="12" fontWeight="700" fill="#fff" fontFamily="Liberation Sans">P</text></svg></U>
        <U><XlLogo s={34} /></U>
      </div>
      <div className="flex-1" />
      <div className="flex h-[50px] items-center">
        <svg width="24" height="34" viewBox="0 0 24 34"><path d="M2 2a2 2 0 012-2h11l9 9v23a2 2 0 01-2 2H4a2 2 0 01-2-2z" fill="#3aa0f0" /><path d="M6 22V16h3v6zM11 22V11h3v11zM16 22v-8h3v8z" fill="#0b5fa8" /><path d="M5 25h15M5 29h15" stroke="#d6eefc" strokeWidth="2" /></svg>
        <span className="ml-[13px] w-[152px] whitespace-nowrap font-['Roboto',sans-serif] text-[17px]">Earnings upcoming</span>
        <span className="ml-[30px]"><ChevronUp size={22} strokeWidth={1.3} /></span>
        <span className="ml-[8px]"><Video size={20} strokeWidth={1.2} /></span>
        <span className="ml-[10px]"><Volume2 size={20} strokeWidth={1.2} /></span>
        <span className="ml-[10px]"><Monitor size={20} strokeWidth={1.2} /></span>
        <div className="ml-[11px] flex w-[70px] flex-col items-center font-['Roboto',sans-serif] text-[15px] leading-[21px]"><span>8:26 AM</span><span>4/15/2024</span></div>
        <span className="ml-[22px]"><MessageSquare size={22} strokeWidth={1.2} /></span>
        <svg width="28" height="34" viewBox="0 0 28 34" className="ml-[28px] mr-[24px]"><path d="M8 3h12c6 0 7 6 5 13l-3 6H8c-6 0-7-8-4-13z" fill="#3aa0f0" /><path d="M4 9c3-5 8-6 10-3l-2 14H6C2 20 2 14 4 9z" fill="#5dd39e" /><path d="M14 4c6-2 10 0 11 8l-5 8h-4z" fill="#d66bd1" /><rect x="9" y="22" width="18" height="11" rx="2" fill="#f5c518" /><text x="18" y="31" textAnchor="middle" fontSize="8" fontWeight="700" fill="#222" fontFamily="Liberation Sans">PRE</text></svg>
      </div>
    </div>
  );
}

const letters = ["A", "B", "C", "D", "E", "F", "G", "H", "I", "J", "K", "L"];
const letters2 = ["M", "N", "O", "P", "Q", "R", "S", "T", "U", "V", "W", "X"];
const menu = ["File", "Home", "Insert", "Page Layout", "Formulas", "Data", "Review", "View", "Developer", "Help"];

export default function App() {
  return (
    <div className="flex h-[1440px] w-[2560px] flex-col overflow-hidden bg-[#efefef] font-['Roboto',sans-serif]">
      {/* title bar */}
      <div className="flex h-[60px] shrink-0 items-center text-[13px] text-[#a8a8a8]">
        <span className="ml-[19px]"><XlLogo s={22} /></span>
        <span className="ml-[20px] w-[54px] whitespace-nowrap">AutoSave</span>
        <div className="ml-[8px] flex h-[24px] w-[54px] shrink-0 items-center rounded-[12px] border-[1.5px] border-[#c8c8c8] pl-[3px]">
          <span className="h-[17px] w-[17px] rounded-full bg-[#bdbdbd]" /><span className="ml-[6px] text-[13px]">Off</span>
        </div>
        <span className="ml-[15px]"><Save size={22} strokeWidth={1.2} /></span>
        <span className="ml-[12px]"><Undo2 size={22} strokeWidth={1.2} /></span>
        <span className="ml-[2px]"><Chev s={9} c="#a8a8a8" /></span>
        <span className="ml-[16px]"><Redo2 size={22} strokeWidth={1.2} /></span>
        <span className="ml-[2px]"><Chev s={9} c="#a8a8a8" /></span>
        <span className="ml-[20px] flex flex-col items-center"><span className="h-px w-[8px] bg-[#a8a8a8]" /><Chev s={10} c="#a8a8a8" /></span>
        <span className="ml-[31px] text-[15px] text-[#b4b4b4]">Renewable Natural Gas Producer (biomethane)</span>
        <span className="ml-[6px]"><Chev s={14} c="#b4b4b4" /></span>
        <div className="ml-[298px] flex h-[40px] w-[585px] items-center rounded-[5px] border border-[#d6d6d6] bg-[#efefef] shadow-[0_1px_2px_rgba(0,0,0,0.18)]">
          <Search size={20} strokeWidth={1.2} className="ml-[26px] -scale-x-100" color="#b0b0b0" />
          <span className="ml-[14px] text-[15.5px] text-[#b8b8b8]">Search</span>
        </div>
        <span className="ml-[549px] w-[76px] whitespace-nowrap">Jason Varner</span>
        <span className="ml-[10px] flex h-[30px] w-[30px] shrink-0 items-center justify-center rounded-full bg-[#a4262c] text-[13px] text-[#e8c8c8]">JV</span>
        <span className="ml-[35px]"><Gem size={20} strokeWidth={1} /></span>
        <span className="ml-[38px]"><PenLine size={20} strokeWidth={1} /></span>
        <span className="ml-[40px]"><Minus size={18} strokeWidth={1} /></span>
        <span className="ml-[41px]"><CopyIcon size={17} strokeWidth={1} /></span>
        <span className="ml-[42px]"><X size={20} strokeWidth={1} /></span>
      </div>

      {/* menu */}
      <div className="flex h-[40px] shrink-0 items-start pt-[9px] text-[17px] text-[#333]">
        <div className="ml-[27px] flex gap-[25px]">
          {menu.map((m, i) => (
            <div key={m} className={`relative whitespace-nowrap ${i === 0 ? "mr-[7px]" : ""} ${i === 1 ? "font-medium text-black" : ""}`}>
              {m}
              {i === 1 && <span className="absolute -bottom-[4px] left-0 h-[3px] w-full rounded-[2px] bg-[#107c41]" />}
            </div>
          ))}
        </div>
        <div className="flex-1" />
        <div className="-mt-[4px] flex h-[30px] w-[117px] items-center justify-center gap-[5px] rounded-[5px] border border-[#b5b5b5] bg-white text-[16px]"><MessageSquare size={15} strokeWidth={1.3} />Comments</div>
        <div className="-mt-[4px] ml-[10px] flex h-[30px] w-[89px] items-center justify-center gap-[4px] rounded-[5px] bg-[#107c41] text-[16px] text-white"><svg width="16" height="18" viewBox="0 0 16 18" fill="none" stroke="#fff" strokeWidth="1.2"><path d="M11 4H2v12h11v-6M7 10c0-4 3-6 6-6M10 1l3 3-3 3" /></svg>Share<Chev s={10} c="#fff" /></div>
        <span className="-mt-[4px] ml-[16px] mr-[17px]">
          <svg width="24" height="26" viewBox="0 0 24 26" fill="none" stroke="#333" strokeWidth="1.2"><path d="M10 2h13v12H16l-3 3" /><circle cx="7" cy="11" r="4.5" fill="#efefef" /><path d="M1 25c0-6 3-9 6-9s6 3 6 9" fill="#efefef" /></svg>
        </span>
      </div>

      <Ribbon />

      {/* formula bar */}
      <div className="mx-[10px] mt-[10px] flex h-[29px] shrink-0 items-center text-[16.3px] text-[#333]">
        <div className="flex h-full w-[126px] items-center justify-between rounded-[5px] border border-[#dadada] bg-white pl-[6px] pr-[6px]">A62<Chev s={12} /></div>
        <div className="flex w-[26px] justify-center"><MoreVertical size={15} strokeWidth={2} /></div>
        <div className="flex h-full w-[91px] items-center justify-around rounded-[5px] border border-[#dadada] bg-white px-[2px] text-[#aaa]">
          <X size={18} strokeWidth={1.1} /><Check size={18} strokeWidth={1.1} /><span className="font-['Liberation_Serif',serif] text-[19px] italic text-[#333]">fx</span>
        </div>
        <div className="ml-[6px] flex h-full flex-1 items-center justify-between rounded-[5px] border border-[#dadada] bg-white pl-[12px] pr-[5px]">Owner IRR<ChevronDown size={15} strokeWidth={1.3} /></div>
      </div>

      {/* column headers */}
      <div className="mt-[11px] flex h-[20px] shrink-0 border-b-[1.5px] border-[#b8b8b8] font-['Lato',sans-serif] text-[15px] text-[#444]">
        <div className="flex w-[33px] shrink-0 items-end justify-end border-r border-[#dcdcdc] pb-[2px] pr-[2px]"><span className="h-0 w-0 border-b-[14px] border-l-[14px] border-b-[#d4d4d4] border-l-transparent" /></div>
        <div className="grid w-[2501.6px] shrink-0 grid-cols-[240px_123px_repeat(10,127.1px)_repeat(12,72.3px)]">
          {[...letters, ...letters2].map((l) => (
            <div key={l} className="flex items-center justify-center border-r border-[#dcdcdc]">{l}</div>
          ))}
        </div>
        <div className="flex flex-1 items-center justify-center bg-[#f4f4f4]"><span className="h-0 w-0 border-x-[7px] border-b-[9px] border-x-transparent border-b-[#666]" /></div>
      </div>

      {/* sheet */}
      <div className="flex h-[1029px] shrink-0 overflow-hidden bg-white">
        <div className="flex w-[1667px] shrink-0 flex-col font-['Lato',sans-serif]">
          {rows.map((r, i) => <Row key={i} r={r} />)}
        </div>
        <div className="ml-[5px] flex w-[862px] shrink-0 flex-col pt-[33px]">
          <div className="h-[662px] shrink-0 overflow-hidden border-t border-l border-b border-black bg-[#f2f2f2]">
            <Chart title="Total Revenue" data={rev} zero={952} per={70.9} max={8} top={328} h={660} titleY={361} />
          </div>
          <div className="mt-[2px] h-[335px] shrink-0 overflow-hidden border-t border-l border-black bg-[#f2f2f2]">
            <Chart title="EBITDA" data={ebitda} zero={1544} per={82.7} max={6} top={991} h={334} titleY={1023} />
          </div>
        </div>
        <div className="flex w-[26px] shrink-0 flex-col items-center bg-[#f4f4f4]">
          <span className="h-[672px] w-[12px] rounded-[6px] bg-[#707070]" />
          <span className="flex-1" />
          <span className="mb-[4px] h-0 w-0 border-x-[7px] border-t-[10px] border-x-transparent border-t-[#666]" />
        </div>
      </div>

      <SheetTabs />

      {/* status */}
      <div className="flex h-[27px] shrink-0 items-center border-t border-[#fff] bg-[#f3f3f3] font-['Roboto',sans-serif] text-[13.5px] text-[#444]">
        <span className="ml-[14px]">Ready</span>
        <svg width="18" height="24" viewBox="0 0 18 24" fill="none" className="ml-[25px]" stroke="#555"><path d="M1 2h16v20H1zM1 6h16M4 10h4M4 14h3" /><circle cx="12" cy="16" r="4" /><circle cx="12" cy="16" r="1.2" /></svg>
        <svg width="20" height="24" viewBox="0 0 20 24" fill="none" className="ml-[21px]" stroke="#555"><circle cx="9" cy="4" r="2.5" /><path d="M2 8h14M9 8v6M5 22l4-8 4 8" /><path d="M8 13l10 9M18 13L9 22" stroke="#777" /></svg>
        <span className="ml-[5px] font-bold">Accessibility: Investigate</span>
        <div className="flex-1" />
        <span>Count: 5</span>
        <div className="ml-[24px] flex h-full w-[50px] items-center justify-center bg-[#e0e0e0]">
          <svg width="18" height="18" viewBox="0 0 18 18" fill="none" stroke="#444"><path d="M1 1h16v16H1zM6.3 1v16M11.6 1v16M1 6.3h16M1 11.6h16" /></svg>
        </div>
        <span className="ml-[16px]"><svg width="18" height="20" viewBox="0 0 18 20" fill="none" stroke="#444"><path d="M1 1h16v18H1z" /><rect x="5" y="4" width="8" height="12" /><path d="M6.5 7h5M6.5 10h5M6.5 13h5" /></svg></span>
        <span className="ml-[32px]"><svg width="18" height="20" viewBox="0 0 18 20" fill="none" stroke="#444"><path d="M1 1h16v18H1z" /><path d="M9 1v11H1" /></svg></span>
        <span className="ml-[24px]"><Minus size={12} /></span>
        <div className="relative ml-[4px] flex w-[125px] items-center">
          <span className="h-px w-full bg-[#666]" />
          <span className="absolute left-[51px] h-[22px] w-[6px] bg-[#555]" />
          <span className="absolute left-[62px] h-[9px] w-px bg-[#666]" />
        </div>
        <span className="ml-[4px]"><Plus size={12} /></span>
        <span className="ml-[15px] mr-[18px]">90%</span>
      </div>

      <Taskbar />
    </div>
  );
}
